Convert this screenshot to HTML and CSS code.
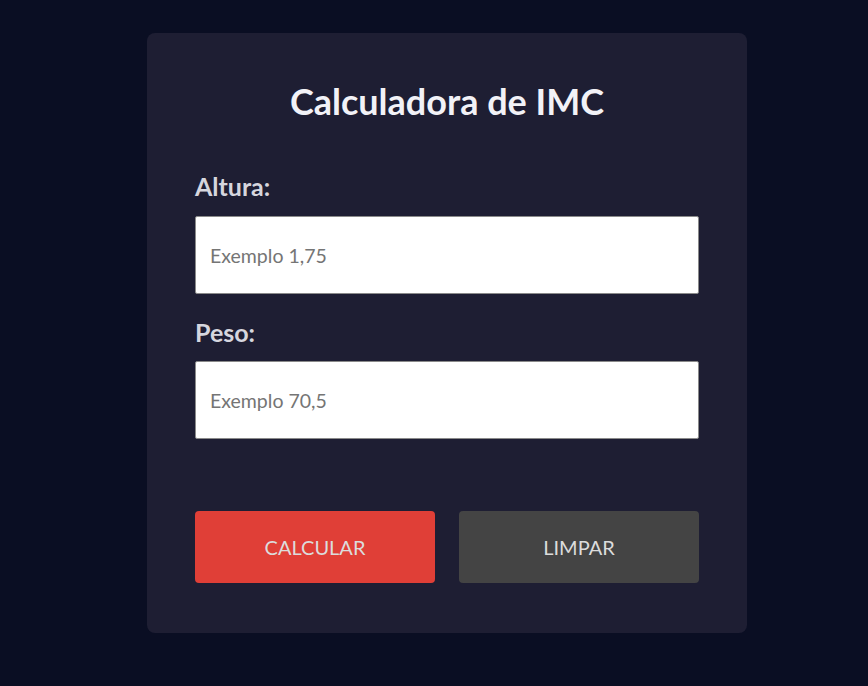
FILE: index.html
```html
<!DOCTYPE html>
<html lang="pt-BR">
<head>
<meta charset="utf-8">
<title>Calculadora de IMC</title>
<link rel="stylesheet" href="styles.css">
</head>
<body>
<main class="card">
  <h1 class="title">Calculadora de IMC</h1>
  <form class="form">
    <label class="label" for="altura">Altura:</label>
    <input class="input" id="altura" type="text" placeholder="Exemplo 1,75">
    <label class="label" for="peso">Peso:</label>
    <input class="input" id="peso" type="text" placeholder="Exemplo 70,5">
    <div class="actions">
      <button type="button" class="btn btn-calc">CALCULAR</button>
      <button type="reset" class="btn btn-clear">LIMPAR</button>
    </div>
  </form>
</main>
</body>
</html>
```
FILE: styles.css
```css
* { box-sizing: border-box; }
html, body { margin: 0; padding: 0; }
body {
  background: #0a0e23;
  font-family: Lato, "Liberation Sans", sans-serif;
  min-height: 686px;
  display: flex;
  justify-content: center;
  align-items: flex-start;
  padding-top: 33px;
  padding-left: 26px;
}
.card {
  width: 600px;
  height: 600px;
  background: #1e1e33;
  border-radius: 8px;
  padding: 48px;
}
.title {
  margin: 0;
  text-align: center;
  color: #f2f2f7;
  font-size: 36px;
  font-weight: 700;
  line-height: 40px;
}
.form {
  display: flex;
  flex-direction: column;
}
.label {
  color: #d6d6de;
  font-size: 25px;
  font-weight: 700;
  line-height: 28px;
  margin-top: 51px;
  margin-bottom: 16px;
}
.label + .input + .label { margin-top: 24px; margin-bottom: 15px; }
.input {
  height: 78px;
  width: 100%;
  border: 1px solid #8a8a8a;
  border-radius: 2px;
  background: #fff;
  padding: 0 14px;
  font-family: inherit;
  font-size: 19.5px;
  color: #333;
  outline: none;
}
.input::placeholder { color: #757575; }
.actions {
  display: flex;
  gap: 24px;
  margin-top: 72px;
}
.btn {
  flex: 1;
  height: 72px;
  border: none;
  border-radius: 4px;
  font-family: inherit;
  font-size: 20px;
  color: #dcdcdc;
  cursor: pointer;
}
.btn-calc { background: #e03f37; }
.btn-clear { background: #444444; }
```
